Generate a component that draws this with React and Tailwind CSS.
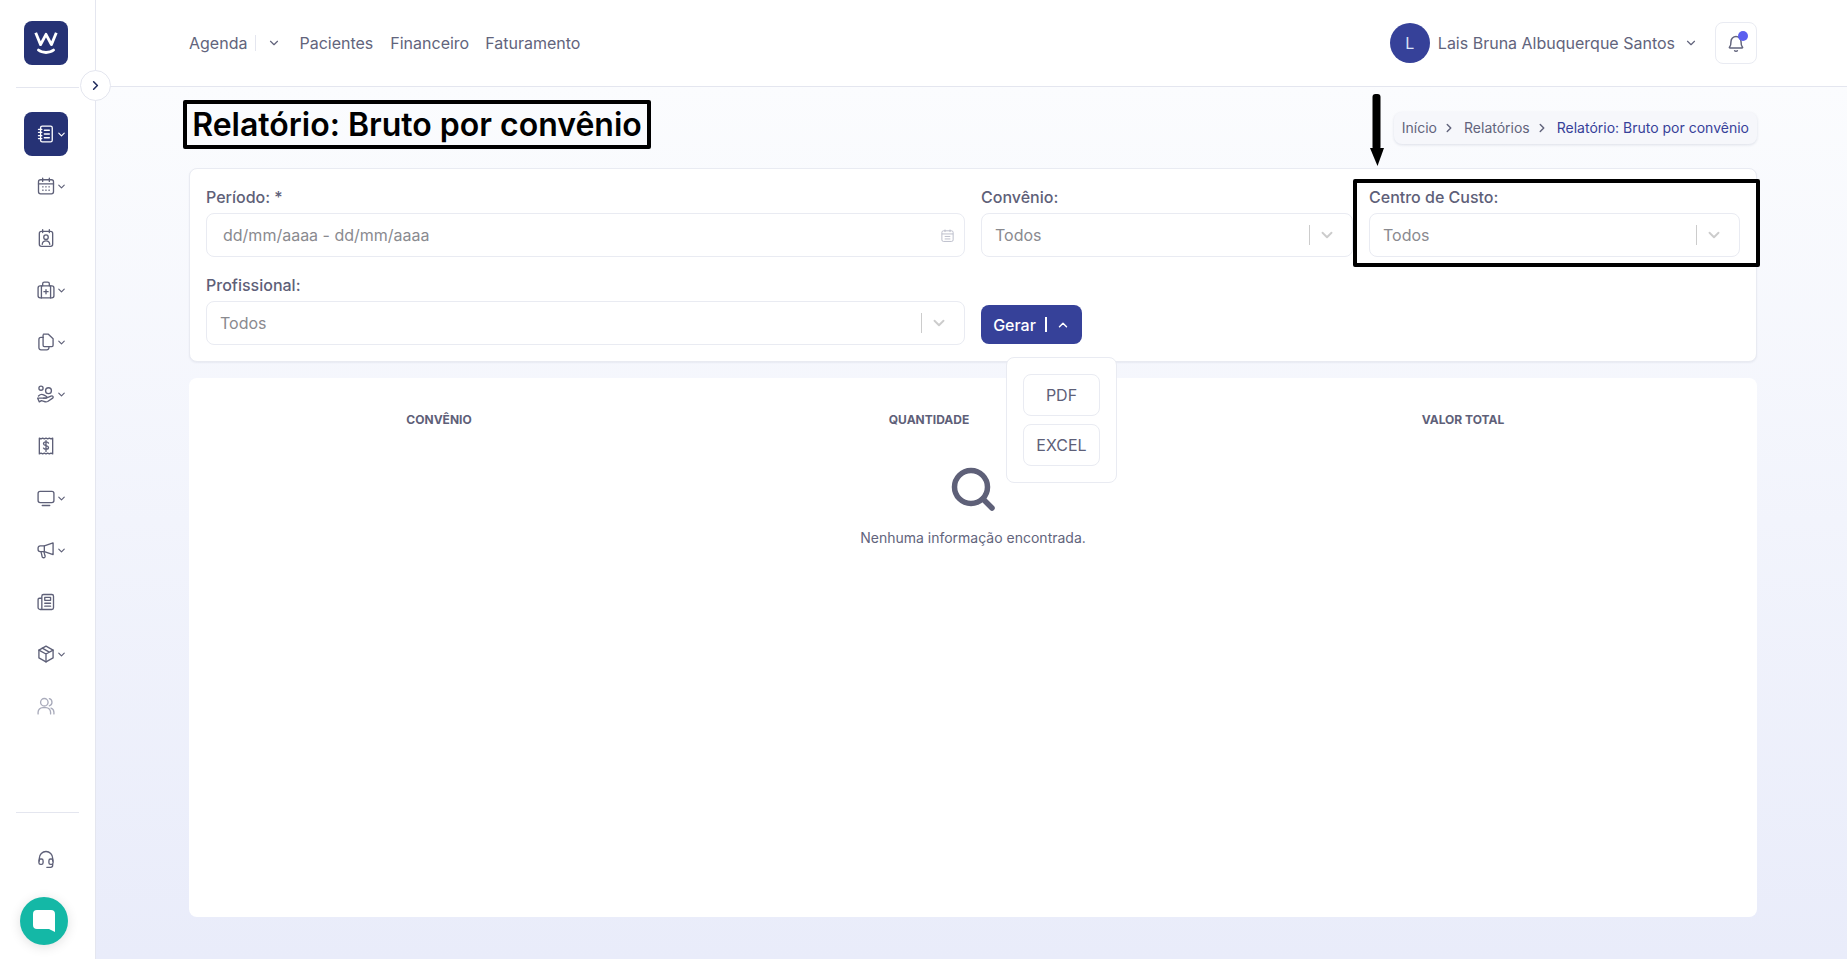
import { ChevronDown, ChevronRight, ChevronUp } from 'lucide-react'

const Svg = ({ className = 'w-[20px] h-[20px]', children, sw = 1.6 }) => (
  <svg viewBox="0 0 24 24" fill="none" stroke="currentColor" strokeWidth={sw} strokeLinecap="round" strokeLinejoin="round" className={className}>
    {children}
  </svg>
)

const NotebookIcon = () => (
  <Svg>
    <rect x="5.5" y="2.5" width="14" height="19" rx="2" />
    <path d="M3 6.5h4M3 10h4M3 14h4M3 17.5h4M10 7.5h6M10 12h6M10 16.5h6" />
  </Svg>
)
const CalendarIcon = () => (
  <Svg>
    <rect x="3" y="4.5" width="18" height="17" rx="2.5" />
    <path d="M3 9.5h18M8 2.5v4M16 2.5v4" />
    <path d="M8 13h.5M11.7 13h.5M15.5 13h.5M8 17h.5M11.7 17h.5M15.5 17h.5" />
  </Svg>
)
const PatientIcon = () => (
  <Svg>
    <rect x="4" y="4" width="16" height="18" rx="2.5" />
    <path d="M8 2v3.5M16 2v3.5M7.5 19.5c.3-3 2-4 4.5-4s4.2 1 4.5 4" />
    <circle cx="12" cy="11" r="2.7" />
  </Svg>
)
const CaseIcon = () => (
  <Svg>
    <rect x="2.5" y="7" width="19" height="14.5" rx="2.5" />
    <path d="M8 7V4.5A2 2 0 0 1 10 2.5h4a2 2 0 0 1 2 2V7M6.5 7v14.5M17.5 7v14.5M12 11.5v5M9.5 14h5" />
  </Svg>
)
const CopyIcon = () => (
  <Svg>
    <path d="M9 2.5h5.5L20.5 8v8a1.5 1.5 0 0 1-1.5 1.5H10A1.5 1.5 0 0 1 8.500 16V3.500" />
    <path d="M8.500 6.500H6A2.500 2.500 0 0 0 3.500 9v10A2.500 2.500 0 0 0 6 21.500h7a2.500 2.500 0 0 0 2.500-2.500v-1.500" />
  </Svg>
)
const HandIcon = () => (
  <Svg>
    <circle cx="6" cy="5" r="2.500" />
    <circle cx="15" cy="8" r="3.500" />
    <path d="M3 14.500c2-2 4-2.500 6-1.500l3 1.500c1.500.5 1.500 2.500-.500 2.500H9" />
    <path d="M12 17l6-2.500c2-.7 3.500 1 2 2.500l-6 4c-1.500.7-3 .5-4.500-.2L6.500 20 4 21.500 2 17z" />
  </Svg>
)
const ReceiptIcon = () => (
  <Svg>
    <path d="M4 2.500l2 1 2-1 2 1 2-1 2 1 2-1 2 1 2-1v19l-2-1-2 1-2-1-2 1-2-1-2 1-2-1-2 1z" />
    <path d="M15 8.500c-.5-1-1.500-1.500-3-1.500-2 0-3 1-3 2.300 0 3 6 1.500 6 4.500 0 1.200-1 2.200-3 2.200-1.500 0-2.600-.5-3-1.500M12 5.500v13" />
  </Svg>
)
const MonitorIcon = () => (
  <Svg>
    <rect x="2.500" y="4" width="19" height="13.500" rx="2.500" />
    <path d="M7.500 21h9" />
  </Svg>
)
const MegaphoneIcon = () => (
  <Svg>
    <path d="M20.500 3.500v14L10 14H5a2.500 2.500 0 0 1-2.500-2.500V9.500A2.500 2.500 0 0 1 5 7h5z" />
    <path d="M10 7v7M6 14l1.500 6.500c.3 1 2.500 1 3.200 0 .3-.5.300-1 .1-1.500L9.500 14" />
  </Svg>
)
const NewspaperIcon = () => (
  <Svg>
    <path d="M7 20.500V5a2 2 0 0 1 2-2h10a2 2 0 0 1 2 2v14a2 2 0 0 1-2 2H5a2.500 2.500 0 0 1-2.500-2.500V9A1.500 1.500 0 0 1 4 7.500h3" />
    <rect x="10.500" y="6.500" width="7" height="3.500" />
    <path d="M10.500 13.500h7M10.500 17h7" />
  </Svg>
)
const BoxIcon = () => (
  <Svg>
    <path d="M12 2.500l8.500 4.800v9.400L12 21.500l-8.500-4.800V7.300z" />
    <path d="M3.500 7.300L12 12l8.500-4.700M12 12v9.500M7.500 5l8.500 4.800" />
  </Svg>
)
const UsersIcon = () => (
  <Svg>
    <circle cx="10" cy="7.500" r="4.500" />
    <path d="M2.500 21.500v-2a5.500 5.500 0 0 1 5.500-5.500h4a5.500 5.500 0 0 1 5.500 5.500v2M16 3.200a4.500 4.500 0 0 1 0 8.600M21.500 21.500v-2a5.500 5.500 0 0 0-3.500-5" />
  </Svg>
)
const HeadsetIcon = () => (
  <Svg>
    <path d="M4 14.500V11a8 8 0 0 1 16 0v3.500" />
    <rect x="3.500" y="12" width="5" height="6.500" rx="2" />
    <rect x="15.500" y="12" width="5" height="6.500" rx="2" />
    <path d="M20 18.500v1a2.500 2.500 0 0 1-2.500 2.500H13" />
  </Svg>
)

const sideItems = [
  { id: 'notebook', icon: NotebookIcon, arrow: true, active: true },
  { id: 'calendar', icon: CalendarIcon, arrow: true },
  { id: 'patient', icon: PatientIcon },
  { id: 'case', icon: CaseIcon, arrow: true },
  { id: 'copy', icon: CopyIcon, arrow: true },
  { id: 'hand', icon: HandIcon, arrow: true },
  { id: 'receipt', icon: ReceiptIcon },
  { id: 'monitor', icon: MonitorIcon, arrow: true },
  { id: 'megaphone', icon: MegaphoneIcon, arrow: true },
  { id: 'news', icon: NewspaperIcon },
  { id: 'box', icon: BoxIcon, arrow: true },
  { id: 'users', icon: UsersIcon, muted: true },
]

const Sidebar = () => (
  <aside className="w-[96px] shrink-0 bg-white border-r border-[#e4e6ef] flex flex-col relative">
    <div className="mx-[16px] h-[88px] border-b border-[#e4e6ef] pt-[21px] pl-[8px]">
      <div className="w-[44px] h-[44px] rounded-[8px] bg-[#263275] flex items-center justify-center">
        <svg viewBox="0 0 24 24" className="w-[26px] h-[26px]" fill="none" stroke="white" strokeWidth="2.600" strokeLinecap="round" strokeLinejoin="round">
          <path d="M2.500 2.500l4.500 11 5-9.500 5 9.500 4.500-11" strokeLinecap="butt" />
          <path d="M5 18.500c3.500 3 10.500 3 14 0" />
        </svg>
      </div>
    </div>
    <button className="absolute left-[80px] top-[70px] w-[31px] h-[31px] rounded-full bg-white border border-[#e4e6ef] flex items-center justify-center text-[#1f2a5c] z-10">
      <ChevronRight className="w-[15px] h-[15px]" strokeWidth={2.500} />
    </button>

    <nav className="flex flex-col gap-[8px] pt-[24px] pl-[24px]">
      {sideItems.map((item) => {
        const Icon = item.icon
        return (
          <div
            key={item.id}
            className={`w-[44px] h-[44px] rounded-[8px] flex items-center pl-[12px] gap-[1px] ${
              item.active ? 'bg-[#263275] text-white' : item.muted ? 'text-[#a9abbb]' : 'text-[#5e6078]'
            }`}
          >
            <Icon />
            {item.arrow && <ChevronDown className="w-[11px] h-[11px] -ml-[1px] shrink-0" strokeWidth={2.500} />}
          </div>
        )
      })}
    </nav>

    <div className="mt-auto">
      <div className="mx-[16px] border-t border-[#e4e6ef] h-[25px]" />
      <div className="pl-[36px] h-[44px] text-[#5e6078] flex items-center">
        <HeadsetIcon />
      </div>
      <div className="pl-[20px] pt-[16px] pb-[14px]">
        <div className="w-[48px] h-[48px] rounded-full bg-[#14b8a6] shadow-[0_2px_12px_rgba(0,0,0,0.12)] flex items-center justify-center">
          <svg viewBox="0 0 22 22" className="w-[22px] h-[24px]" fill="white">
            <path d="M4 0h14a4 4 0 0 1 4 4v18l-6-3H4a4 4 0 0 1-4-4V4a4 4 0 0 1 4-4z" />
          </svg>
        </div>
      </div>
    </div>
  </aside>
)

const Header = () => (
  <header className="h-[87px] shrink-0 bg-white border-b border-[#e4e6ef] pl-[93px] pr-[90px] flex items-center justify-between text-[16px] text-[#62647c]">
    <div className="flex items-center">
      <span>Agenda</span>
      <span className="ml-[8px] w-px h-[16px] bg-[#e4e6ef]" />
      <ChevronDown className="ml-[11px] w-[14px] h-[14px]" />
      <span className="ml-[18px]">Pacientes</span>
      <span className="ml-[17px]">Financeiro</span>
      <span className="ml-[16px]">Faturamento</span>
    </div>
    <div className="flex items-center">
      <div className="w-[40px] h-[40px] rounded-full bg-[#364199] text-[#dbe4f8] flex items-center justify-center text-[16px]">L</div>
      <span className="ml-[8px]">Lais Bruna Albuquerque Santos</span>
      <ChevronDown className="ml-[9px] w-[14px] h-[14px]" />
      <button className="relative ml-[17px] w-[42px] h-[42px] rounded-[8px] border border-[#e9ebf2] flex items-center justify-center text-[#62647c]">
        <svg viewBox="0 0 24 24" className="w-[22px] h-[22px]" fill="none" stroke="currentColor" strokeWidth="1.600" strokeLinecap="round" strokeLinejoin="round">
          <path d="M5 16.500c1.500-1.500 1.500-3.500 1.500-6a5.500 5.500 0 0 1 11 0c0 2.500 0 4.500 1.500 6 .5.500.2 1-.5 1h-13c-.7 0-1-.5-.5-1zM10.500 20.500c.7.700 2.300.700 3 0" />
        </svg>
        <span className="absolute top-[8px] right-[8px] w-[10px] h-[10px] rounded-full bg-[#5b5fef]" />
      </button>
    </div>
  </header>
)

const Field = ({ label, children }) => (
  <div>
    <div className="h-[24px] leading-[24px] mb-[4px] text-[16px] font-medium text-[#5e6078]">{label}</div>
    {children}
  </div>
)

const SelectBox = ({ value = 'Todos' }) => (
  <div className="h-[44px] rounded-[8px] border border-[#e9ebf2] bg-white flex items-center pl-[13px] pr-[8px] text-[16px] text-[#8a8a8f]">
    <span className="flex-1">{value}</span>
    <span className="w-px h-[20px] bg-[#cccccc]" />
    <ChevronDown className="mx-[8px] w-[18px] h-[18px] text-[#cccccc]" strokeWidth={2.500} />
  </div>
)

const Filters = () => (
  <section className="bg-white rounded-[8px] border border-[#e9ebf2] shadow-[0_1px_2px_rgba(20,30,80,0.06)] p-[16px] grid grid-cols-[759px_372px_371px] gap-x-[16px] gap-y-[16px]">
    <Field label="Período: *">
      <div className="h-[44px] rounded-[8px] border border-[#e9ebf2] bg-white flex items-center pl-[16px] pr-[9px] text-[16px] text-[#8a8a8f]">
        <span className="flex-1">dd/mm/aaaa - dd/mm/aaaa</span>
        <svg viewBox="0 0 24 24" className="w-[15px] h-[15px] text-[#b9bbc9]" fill="none" stroke="currentColor" strokeWidth="1.500">
          <rect x="3" y="4.500" width="18" height="17" rx="2.500" />
          <path d="M3 9.500h18M8 2.500v4M16 2.500v4M7.500 13.500h9M7.500 17.500h9" />
        </svg>
      </div>
    </Field>
    <Field label="Convênio:">
      <SelectBox />
    </Field>
    <div className="relative">
      <Field label="Centro de Custo:">
        <SelectBox />
      </Field>
      {/* annotation */}
      <div className="absolute left-[-16px] right-[-20px] top-[-6px] bottom-[-10px] border-[4px] border-black rounded-[2px] pointer-events-none" />
    </div>
    <Field label="Profissional:">
      <SelectBox />
    </Field>
    <div className="relative pt-[32px]">
      <button className="w-[101px] h-[39px] rounded-[8px] bg-[#364199] text-white text-[16px] font-medium flex items-center justify-center">
        Gerar
        <span className="ml-[9px] w-[2px] h-[15px] bg-white" />
        <ChevronUp className="ml-[9px] w-[14px] h-[14px]" strokeWidth={2.500} />
      </button>
      <div className="absolute z-20 left-[25px] top-[84px] w-[111px] h-[126px] rounded-[8px] border border-[#e9ebf2] bg-white p-[16px] flex flex-col gap-[8px] text-[16px] text-[#5e6078]">
        <button className="h-[42px] rounded-[8px] border border-[#e9ebf2] bg-white">PDF</button>
        <button className="h-[42px] rounded-[8px] border border-[#e9ebf2] bg-white">EXCEL</button>
      </div>
    </div>
  </section>
)

const ResultTable = () => (
  <section className="flex-1 mt-[16px] bg-white rounded-[8px] px-[17px] pt-[32px] flex flex-col">
    <div className="grid grid-cols-[466px_514px_554px] text-[12px] font-bold text-[#5e6078] text-center leading-[20px] uppercase">
      <div>Convênio</div>
      <div>Quantidade</div>
      <div>Valor Total</div>
    </div>
    <div className="mt-[37px] flex flex-col items-center">
      <svg viewBox="0 0 44 44" className="w-[44px] h-[44px] text-[#5e6078]" fill="none" stroke="currentColor" strokeWidth="5.500" strokeLinecap="round">
        <circle cx="20" cy="20" r="16.500" />
        <path d="M32 32l9 9" />
      </svg>
      <p className="mt-[17px] text-[14px] leading-[20px] text-[#62647c]">Nenhuma informação encontrada.</p>
    </div>
  </section>
)

const Crumbs = () => (
  <div className="h-[32px] rounded-[8px] bg-[#f6f7fb] shadow-[0_1px_3px_rgba(20,30,80,0.12)] px-[8px] flex items-center text-[14px] text-[#62647c]">
    <span>Início</span>
    <ChevronRight className="mx-[5px] w-[14px] h-[14px]" strokeWidth={2.500} />
    <span className="ml-[3px]">Relatórios</span>
    <ChevronRight className="mx-[5px] w-[14px] h-[14px]" strokeWidth={2.500} />
    <span className="ml-[3px] text-[#364199]">Relatório: Bruto por convênio</span>
  </div>
)

export default function App() {
  return (
    <div className="h-[959px] flex overflow-hidden font-['Inter',sans-serif] bg-white">
      <Sidebar />
      <div className="flex-1 min-w-0 flex flex-col">
        <Header />
        <main className="flex-1 min-h-0 flex flex-col bg-gradient-to-b from-[#fbfcfe] to-[#e9ecfa] pl-[93px] pr-[90px] pb-[42px]">
          <div className="h-[81px] shrink-0 flex items-center justify-between relative">
            <h1 className="-ml-[6px] -mt-[6px] h-[49px] w-[468px] border-[4px] border-black rounded-[2px] flex items-center justify-center text-[32px] font-semibold text-black whitespace-nowrap">
              Relatório: Bruto por convênio
            </h1>
            <Crumbs />
            {/* annotation */}
            <svg viewBox="0 0 14 72" className="absolute left-[1181px] top-[7px] w-[14px] h-[72px]" fill="black">
              <rect x="2.500" y="0" width="8" height="56" rx="3" />
              <path d="M0 54h14l-6.500 18z" />
            </svg>
          </div>
          <Filters />
          <ResultTable />
        </main>
      </div>
    </div>
  )
}
